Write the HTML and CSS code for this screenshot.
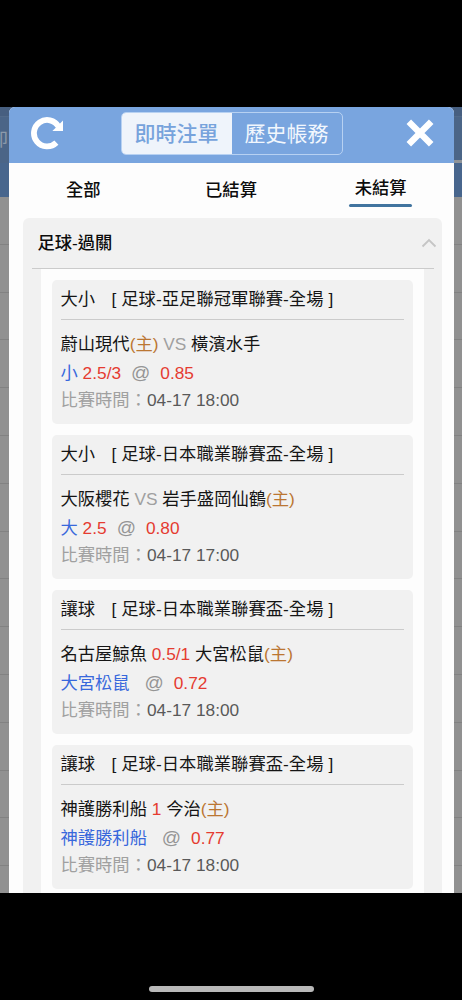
FILE: index.html
```html
<!DOCTYPE html>
<html lang="zh-Hant">
<head>
<meta charset="utf-8">
<title>即時注單</title>
<link rel="stylesheet" href="styles.css">
</head>
<body>
<div class="screen">
  <div class="viewport">
    <div class="backdrop">
      <div class="back-head"><span class="back-label">即</span></div>
      <div class="back-rows"></div>
    </div>
    <div class="back-rule"></div>
    <main class="modal">
      <header class="head">
        <svg class="refresh" viewBox="0 0 34 34" width="34" height="34"><path d="M26.4 26.6A13.2 13.2 0 1 1 28.6 10.6" fill="none" stroke="#fff" stroke-width="5.8"/><path d="M33 4.6V15H22.4Z" fill="#fff"/></svg>
        <nav class="switch"><span class="seg seg-on">即時注單</span><span class="seg seg-off">歷史帳務</span></nav>
        <svg class="close" viewBox="0 0 28 28" width="28" height="28"><path d="M2.8 2.8L25.2 25.2M25.2 2.8L2.8 25.2" stroke="#fff" stroke-width="6.4"/></svg>
      </header>
      <nav class="tabs"><span class="tab">全部</span><span class="tab">已結算</span><span class="tab tab-on">未結算</span></nav>
      <section class="group">
        <div class="group-head"><span>足球-過關</span><svg class="chev" viewBox="0 0 16 10" width="16" height="10"><path d="M1.5 8.5L8 2L14.5 8.5" fill="none" stroke="#c5c5c5" stroke-width="1.8"/></svg></div>
        <div class="list">
          <article class="card">
            <h2 class="title">大小<span class="league">[ 足球-亞足聯冠軍聯賽-全場 ]</span></h2>
            <p class="line match">蔚山現代<span class="host">(主)</span> <span class="muted">VS</span> 橫濱水手</p>
            <p class="line pick"><span class="side">小</span> <span class="red">2.5/3</span><span class="at">@</span><span class="red">0.85</span></p>
            <p class="line time">比賽時間：<span class="date">04-17 18:00</span></p>
          </article>
          <article class="card">
            <h2 class="title">大小<span class="league">[ 足球-日本職業聯賽盃-全場 ]</span></h2>
            <p class="line match">大阪櫻花 <span class="muted">VS</span> 岩手盛岡仙鶴<span class="host">(主)</span></p>
            <p class="line pick"><span class="side">大</span> <span class="red">2.5</span><span class="at">@</span><span class="red">0.80</span></p>
            <p class="line time">比賽時間：<span class="date">04-17 17:00</span></p>
          </article>
          <article class="card">
            <h2 class="title">讓球<span class="league">[ 足球-日本職業聯賽盃-全場 ]</span></h2>
            <p class="line match">名古屋鯨魚 <span class="red">0.5/1</span> 大宮松鼠<span class="host">(主)</span></p>
            <p class="line pick"><span class="side">大宮松鼠</span> <span class="at">@</span><span class="red">0.72</span></p>
            <p class="line time">比賽時間：<span class="date">04-17 18:00</span></p>
          </article>
          <article class="card">
            <h2 class="title">讓球<span class="league">[ 足球-日本職業聯賽盃-全場 ]</span></h2>
            <p class="line match">神護勝利船 <span class="red">1</span> 今治<span class="host">(主)</span></p>
            <p class="line pick"><span class="side">神護勝利船</span> <span class="at">@</span><span class="red">0.77</span></p>
            <p class="line time">比賽時間：<span class="date">04-17 18:00</span></p>
          </article>
        </div>
      </section>
    </main>
  </div>
  <div class="home"></div>
</div>
</body>
</html>
```
FILE: styles.css
```css
* { box-sizing: border-box; }
body { margin: 0; background: #000; font-family: "Liberation Sans", "Noto Sans CJK TC", sans-serif; }
.screen { height: 1000px; padding-top: 107px; overflow: hidden; display: flex; flex-direction: column; align-items: center; }
.viewport { position: relative; width: 462px; height: 786px; flex: none; overflow: hidden; display: flex; padding-left: 9px; }
.backdrop { position: absolute; inset: 0; display: flex; flex-direction: column; background: #8f8f8f; }
.back-head { flex: none; height: 90px; background: linear-gradient(#475f80 9px, #526a89 9px, #526a89 10px, #4b6587 10px, #4b6587 56px, #48668d 56px); }
.back-label { display: block; margin-left: -10px; padding-top: 21px; font-size: 18px; line-height: 24px; color: #8c9aaa; }
.back-rule { position: absolute; right: 0; top: 53px; width: 12px; height: 3px; background: #8f9499; }
.back-rows { flex: 1; background: repeating-linear-gradient(#919191 0, #919191 46.8px, #828282 46.8px, #828282 47.8px); }
.modal { position: relative; width: 445px; height: 100%; overflow: hidden; background: #fdfdfd; border-radius: 6px 6px 0 0; }
.head { height: 56px; background: #79a5df; display: flex; align-items: center; justify-content: space-between; padding: 0 20px 4px 21px; }
.refresh { display: block; }
.switch { display: flex; width: 222px; height: 43px; margin-right: 42px; margin-left: 35px; border: 1px solid #b7d1f2; border-radius: 5px; overflow: hidden; }
.seg { flex: 1; font-size: 21px; line-height: 41px; text-align: center; white-space: nowrap; }
.seg-on { background: #eff4fb; color: #77a3dc; font-weight: 500; }
.seg-off { color: #f2f7fd; }
.close { display: block; }
.tabs { height: 55px; display: flex; align-items: flex-start; padding-top: 12px; }
.tab { flex: 1; display: flex; justify-content: center; padding-left: 1px; font-size: 17.3px; line-height: 31px; font-weight: 500; color: #0c0c0c; }
.tab-on { margin-top: -2px; padding-left: 3px; }
.tab-on::after { content: ""; position: absolute; top: 97px; width: 63px; height: 3px; border-radius: 2px; background: #41749f; }
.group { margin: 0 12.5px 0 14px; height: 700px; border-radius: 6px; background: #f1f1f1; }
.group-head { height: 51px; margin: 0 8px 0 9px; padding: 0 0 4px 5.5px; border-bottom: 1px solid #cbcbcb; display: flex; align-items: center; justify-content: space-between; font-size: 17.3px; font-weight: 500; color: #0c0c0c; }
.chev { margin: 3px -3.5px 0 0; }
.list { margin: 0 18px; height: 649px; padding: 11px 11px 0; background: #fdfdfd; }
.card { height: 144px; margin-bottom: 11.1px; padding: 0 9px 0 8.5px; border-radius: 5px; background: #f1f1f1; color: #151515; font-size: 17.3px; }
.title { margin: 0 0 11px; height: 40px; border-bottom: 1px solid #cbcbcb; font-size: inherit; font-weight: 400; line-height: 38px; white-space: nowrap; }
.league { margin-left: 16.5px; letter-spacing: .05px; }
.line { margin: 0; height: 28px; line-height: 28px; white-space: nowrap; }
.match { line-height: 26px; }
.time { height: 27px; line-height: 27px; color: #a0a0a0; }
.date { color: #595959; }
.host { color: #bb7632; }
.muted { color: #a0a0a0; }
.side { color: #3868dc; }
.red { color: #e53b30; }
.at { margin: 0 10px; color: #959595; font-size: 19px; }
.home { width: 165px; height: 6px; margin-top: 93px; border-radius: 3px; background: #b9b9b9; flex: none; }
```
